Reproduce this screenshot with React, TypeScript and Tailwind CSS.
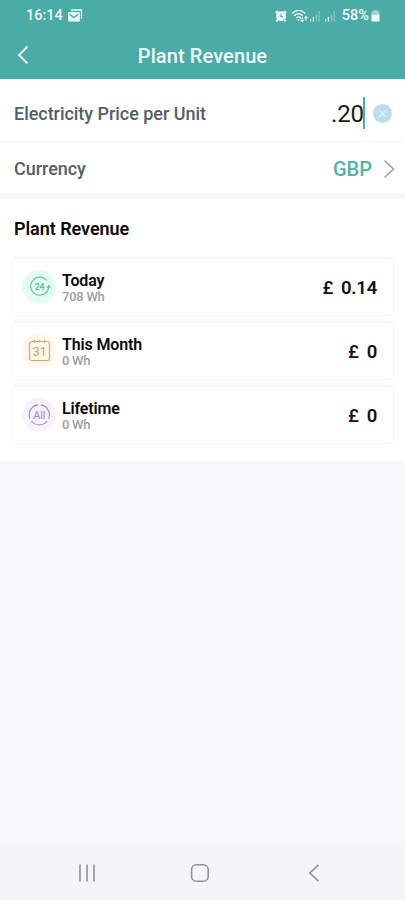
import React from 'react';

interface RevenueItem {
  key: string;
  title: string;
  energy: string;
  amount: string;
  iconBg: string;
  icon: React.ReactNode;
}

const TodayIcon = () => (
  <svg className="w-6 h-6" viewBox="0 0 24 24" fill="none" stroke="#69c79b" strokeWidth="1.2">
    <path d="M19.6 5.4A9 9 0 1 0 21.6 12.6" />
    <path d="M20.4 12.2l1.6-1.6 1 2z" fill="#50bd8a" />
    <text x="12.4" y="14.8" textAnchor="middle" fontSize="8.6" fontWeight="700" letterSpacing="-0.2" fill="#5cc293" stroke="none">24</text>
  </svg>
);

const MonthIcon = () => (
  <svg className="w-6 h-6" viewBox="0 0 24 24" fill="none" stroke="#dfa873" strokeWidth="1.2">
    <rect x="2.5" y="2.5" width="20" height="19" rx="2.5" />
    <path d="M7.5 .8v3.2M12.5 .8v2.4M17.5 .8v3.2" />
    <text x="12.7" y="16.5" textAnchor="middle" fontSize="12.5" fill="#d9a06a" stroke="none">31</text>
  </svg>
);

const LifetimeIcon = () => (
  <svg className="w-6 h-6" viewBox="0 0 24 24" fill="none" stroke="#a98bd0" strokeWidth="1.2">
    <path d="M13.6 1.9A10 10 0 0 1 21.6 15.8M20.2 18A10 10 0 0 1 4.4 18M3 15.8A10 10 0 0 1 11 1.9" />
    <text x="12.3" y="15.8" textAnchor="middle" fontSize="10.8" fill="#a180cc" stroke="none">All</text>
  </svg>
);

const items: RevenueItem[] = [
  { key: 'today', title: 'Today', energy: '708 Wh', amount: '0.14', iconBg: 'bg-[#e5fcf2]', icon: <TodayIcon /> },
  { key: 'month', title: 'This Month', energy: '0 Wh', amount: '0', iconBg: 'bg-[#fff7ea]', icon: <MonthIcon /> },
  { key: 'lifetime', title: 'Lifetime', energy: '0 Wh', amount: '0', iconBg: 'bg-[#f7f3fe]', icon: <LifetimeIcon /> },
];

const StatusBar = () => (
  <div className="h-[31px] flex items-center justify-between pl-[26px] pr-[25px] text-[#eefafa]">
    <div className="flex items-center gap-[5px]">
      <span className="pt-[2px] text-[14.5px] leading-none font-medium">16:14</span>
      <svg className="w-[15px] h-[13px]" viewBox="0 0 15 13" fill="none">
        <path d="M3 1h10.5v8.5" stroke="currentColor" strokeWidth="1.3" />
        <rect x="0" y="3" width="11.8" height="9.5" rx="0.8" fill="currentColor" />
        <path d="M1.5 5.2l4.4 3.4 4.3-3.4" stroke="#4aaba7" strokeWidth="1.3" />
      </svg>
    </div>
    <div className="flex items-center">
      <svg className="w-3 h-3" viewBox="0 0 12 12" fill="none">
        <circle cx="6" cy="6.3" r="5" fill="currentColor" />
        <path d="M.8 3.2L3 1M9 1l2.2 2.2M2.6 10L1.3 11.3M9.4 10l1.3 1.3" stroke="currentColor" strokeWidth="2" />
        <path d="M6 3.8v2.8h2" stroke="#4aaba7" strokeWidth="1.1" />
      </svg>
      <svg className="ml-1 w-[18px] h-[14px]" viewBox="0 0 18 14" fill="none" stroke="currentColor" strokeWidth="1.4">
        <path d="M1 4.4c4-3.8 9.2-3.8 13.2 0M3.2 6.8c2.6-2.4 6-2.4 8.6 0M5.3 9.1c1.3-1.2 3.2-1.2 4.6 0" />
        <circle cx="7.6" cy="11" r="1" fill="currentColor" stroke="none" />
        <path d="M11.2 8v4.5M9.8 11l1.4 1.6 1.4-1.6M15 11.8V7.6M13.5 9.2L15 7.5l1.5 1.7" strokeWidth="1.1" />
      </svg>
      <svg className="w-3 h-[13px]" viewBox="0 0 12 13" fill="currentColor">
        <path d="M1 10h1.2v2.5H1zM3.8 8H5v4.5H3.8z" />
        <path d="M6.8 5H8v7.5H6.8zM9.6 2h1.2v10.5H9.6z" opacity="0.4" />
      </svg>
      <svg className="ml-[3px] w-3 h-[13px]" viewBox="0 0 12 13" fill="currentColor">
        <path d="M1 10h1.2v2.5H1zM3.8 8H5v4.5H3.8z" />
        <path d="M6.8 5H8v7.5H6.8zM9.6 2h1.2v10.5H9.6z" opacity="0.4" />
      </svg>
      <span className="ml-[6px] pt-[2px] text-[14.5px] leading-none font-medium">58%</span>
      <svg className="ml-[2px] w-[9px] h-[13px]" viewBox="0 0 9 13" fill="currentColor">
        <path d="M2.5 1h4v1.2h1.2q.8 0 .8.8v2.5h-8V3q0-.8.8-.8h1.2z" opacity="0.5" />
        <path d="M.5 5.5h8v6q0 1-1 1h-6q-1 0-1-1z" />
      </svg>
    </div>
  </div>
);

const RevenueCard: React.FC<{ item: RevenueItem }> = ({ item }) => (
  <div className="h-[59px] flex items-center bg-white border border-[#f3f4f4] rounded-md pl-[10px] pr-[16px]">
    <div className={`w-[34px] h-[34px] rounded-full flex items-center justify-center ${item.iconBg}`}>
      {item.icon}
    </div>
    <div className="ml-[6px] flex-1 pt-[3px]">
      <div className="text-base leading-[18px] font-semibold tracking-[-0.15px] text-[#080808]">{item.title}</div>
      <div className="text-[13px] leading-[14px] font-medium tracking-[-0.25px] text-[#a0a0a0]">{item.energy}</div>
    </div>
    <div className="flex gap-[8px] pt-[4px] text-[18.5px] leading-none font-semibold tracking-[-0.25px] text-[#111]">
      <span className="font-medium">£</span>
      <span>{item.amount}</span>
    </div>
  </div>
);

export default function App() {
  return (
    <div className="w-full h-[900px] flex flex-col bg-[#f6f8fa] font-['Roboto',sans-serif] overflow-hidden">
      <header className="h-[79px] bg-[#4aaba7]">
        <StatusBar />
        <div className="h-[48px] grid grid-cols-[60px_1fr_60px] items-center">
          <button className="pl-[17px]">
            <svg className="w-3 h-5" viewBox="0 0 12 20" fill="none" stroke="#f2fcfc" strokeWidth="1.8">
              <path d="M10.5 1.5L2 10l8.5 8.5" />
            </svg>
          </button>
          <h1 className="pt-px text-center text-xl font-medium tracking-[0.1px] text-[#eefbfb]">Plant Revenue</h1>
        </div>
      </header>

      {/* Price and currency settings */}
      <section className="bg-white">
        <div className="h-[63px] flex items-center justify-between pl-[14px] pr-[13px] pt-[6px] border-b border-[#f5f6f6]">
          <span className="pt-[2px] text-lg font-medium tracking-[-0.04px] text-[#535e68]">Electricity Price per Unit</span>
          <div className="flex items-center">
            <span className="pt-[2px] text-2xl tracking-[-0.1px] text-[#161c20]">.20</span>
            <span className="-ml-px w-[2px] h-8 bg-[#4aaba7]" />
            <svg className="ml-2 w-[19px] h-[19px]" viewBox="0 0 19 19">
              <circle cx="9.5" cy="9.5" r="9.5" fill="#b9deef" />
              <path d="M6 6l7 7M13 6l-7 7" stroke="#e2f3fa" strokeWidth="1.3" />
            </svg>
          </div>
        </div>
        <div className="h-[51px] flex items-center justify-between pl-[14px] pr-[10px] pt-[2px]">
          <span className="text-lg font-medium tracking-[-0.04px] text-[#535e68]">Currency</span>
          <div className="flex items-center gap-[11px]">
            <span className="text-xl font-medium text-[#55b0aa]">GBP</span>
            <svg className="w-3 h-5" viewBox="0 0 12 20" fill="none" stroke="#999" strokeWidth="1.4">
              <path d="M1.5 1.5L10.5 10l-9 8.5" />
            </svg>
          </div>
        </div>
      </section>

      {/* Revenue breakdown */}
      <section className="mt-[6px] h-[262px] bg-white px-[11px]">
        <h2 className="h-[58px] flex items-center pt-[2px] pl-[3px] text-lg font-semibold tracking-[-0.05px] text-[#080808]">Plant Revenue</h2>
        <div className="flex flex-col gap-[5px]">
          {items.map((item) => (
            <RevenueCard key={item.key} item={item} />
          ))}
        </div>
      </section>

      {/* System navigation */}
      <nav className="mt-auto h-[55px] bg-[#f4f5f7] grid grid-cols-3 items-center pl-[30px] pr-[34px]">
        <svg className="mx-auto w-5 h-5" viewBox="0 0 20 20" stroke="#909294" strokeWidth="1.6">
          <path d="M3 1.5v17M10 1.5v17M17 1.5v17" />
        </svg>
        <svg className="mx-auto w-5 h-5" viewBox="0 0 20 20" fill="none" stroke="#909294" strokeWidth="1.6">
          <rect x="1.6" y="1.8" width="16.6" height="16.4" rx="4.8" />
        </svg>
        <svg className="mx-auto w-5 h-5" viewBox="0 0 20 20" fill="none" stroke="#909294" strokeWidth="1.6">
          <path d="M14.5 1.8L5.8 10l8.7 8.2" />
        </svg>
      </nav>
    </div>
  );
}
